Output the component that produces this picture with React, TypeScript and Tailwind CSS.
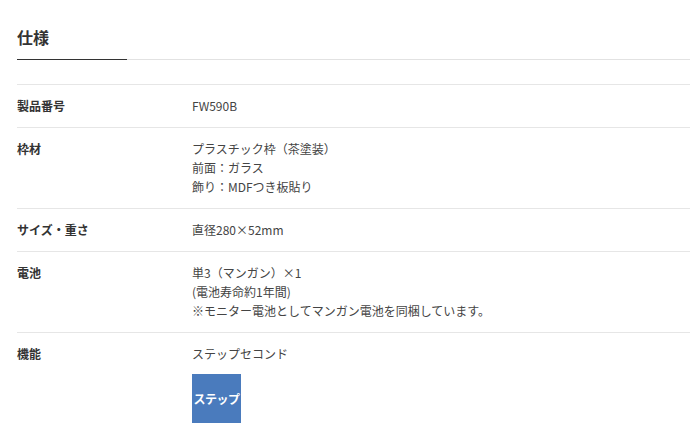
import React from "react";

const rows: { label: string; values: string[] }[] = [
  { label: "製品番号", values: ["FW590B"] },
  { label: "枠材", values: ["プラスチック枠（茶塗装）", "前面：ガラス", "飾り：MDFつき板貼り"] },
  { label: "サイズ・重さ", values: ["直径280×52mm"] },
  { label: "電池", values: ["単3（マンガン）×1", "(電池寿命約1年間)", "※モニター電池としてマンガン電池を同梱しています。"] },
];

export default function App() {
  return (
    <div
      className="w-[700px] h-[436px] overflow-hidden bg-white pl-[17px] pr-[10px] pt-[25px]"
      style={{ fontFamily: '"Noto Sans CJK JP", "Noto Sans", sans-serif' }}
    >
      <h2 className="text-[16px] leading-[24px] font-bold text-[#333] pb-[10px]">仕様</h2>
      <div className="flex h-[1px]">
        <div className="w-[110px] bg-[#333]" />
        <div className="flex-1 bg-[#e2e2e2]" />
      </div>
      <div className="mt-[24px] border-t border-[#e6e6e6]">
        {rows.map((r) => (
          <div key={r.label} className="flex border-b border-[#e6e6e6] pt-[11px] pb-[12px] text-[12px] leading-[19px]">
            <div className="w-[175px] shrink-0 font-bold text-[#333]">{r.label}</div>
            <div className="text-[#444]">
              {r.values.map((v) => (
                <div key={v}>{v}</div>
              ))}
            </div>
          </div>
        ))}
        <div className="flex pt-[11px] text-[12px] leading-[19px]">
          <div className="w-[175px] shrink-0 font-bold text-[#333]">機能</div>
          <div className="text-[#444]">
            <div>ステップセコンド</div>
            <div className="mt-[11px] w-[49px] h-[49px] bg-[#4a7bbd] flex items-center justify-center text-white font-bold text-[12px] tracking-[-0.5px]">
              ステップ
            </div>
          </div>
        </div>
      </div>
    </div>
  );
}
